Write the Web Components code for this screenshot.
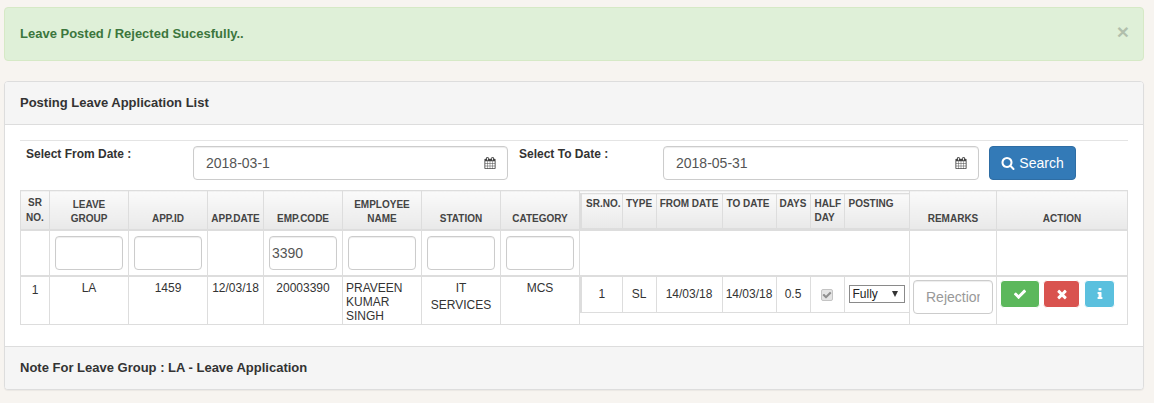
<!DOCTYPE html>
<html>
<head>
<meta charset="utf-8">
<title>Posting Leave Application List</title>
<style>
    html, body{
        margin: 0;
        height: 403px;
        overflow: hidden;
    }
    body{
        background-color: #f7f4f0;
        font-family: "Liberation Sans", Arial, sans-serif;
        font-size: 12px;
        color: #333;
        padding: 7px 10px 0 4px;
        box-sizing: border-box;
    }
</style>
</head>
<body>
    <app-alert>Leave Posted / Rejected Sucesfully..</app-alert>

    <app-panel>
        <span slot="heading">Posting Leave Application List</span>
        <date-search from="2018-03-1" to="2018-05-31"></date-search>
        <leave-table></leave-table>
        <span slot="footer">Note For Leave Group : LA - Leave Application</span>
    </app-panel>

<script>
const ICONS = {
    search: "M1216 832q0-185-131.5-316.5t-316.5-131.5-316.5 131.5-131.5 316.5 131.5 316.5 316.5 131.5 316.5-131.5 131.5-316.5zm512 832q0 52-38 90t-90 38q-54 0-90-38l-343-342q-179 124-399 124-143 0-273.5-55.5t-225-150-150-225-55.5-273.5 55.5-273.5 150-225 225-150 273.5-55.5 273.5 55.5 225 150 150 225 55.5 273.5q0 220-124 399l343 343q37 37 37 90z",
    check: "M1671 566q0 40-28 68l-724 724-136 136q-28 28-68 28t-68-28l-136-136-362-362q-28-28-28-68t28-68l136-136q28-28 68-28t68 28l294 295 656-657q28-28 68-28t68 28l136 136q28 28 28 68z",
    times: "M1490 1322q0 40-28 68l-136 136q-28 28-68 28t-68-28l-294-294-294 294q-28 28-68 28t-68-28l-136-136q-28-28-28-68t28-68l294-294-294-294q-28-28-28-68t28-68l136-136q28-28 68-28t68 28l294 294 294-294q28-28 68-28t68 28l136 136q28 28 28 68t-28 68l-294 294 294 294q28 28 28 68z",
    info: "M1216 1344v128q0 26-19 45t-45 19h-512q-26 0-45-19t-19-45v-128q0-26 19-45t45-19h64v-384h-64q-26 0-45-19t-19-45v-128q0-26 19-45t45-19h384q26 0 45 19t19 45v576h64q26 0 45 19t19 45zm-128-1152v192q0 26-19 45t-45 19h-256q-26 0-45-19t-19-45v-192q0-26 19-45t45-19h256q26 0 45 19t19 45z",
    calendar: "M192 1664h288v-288h-288v288zm352 0h320v-288h-320v288zm-352-352h288v-320h-288v320zm352 0h320v-320h-320v320zm-352-384h288v-288h-288v288zm736 736h320v-288h-320v288zm-384-736h320v-288h-320v288zm768 736h288v-288h-288v288zm-384-352h320v-320h-320v320zm-352-864v-288q0-13-9.5-22.5t-22.5-9.5h-64q-13 0-22.5 9.5t-9.5 22.5v288q0 13 9.5 22.5t22.5 9.5h64q13 0 22.5-9.5t9.5-22.5zm736 864h288v-320h-288v320zm-384-384h320v-288h-320v288zm384 0h288v-288h-288v288zm32-480v-288q0-13-9.5-22.5t-22.5-9.5h-64q-13 0-22.5 9.5t-9.5 22.5v288q0 13 9.5 22.5t22.5 9.5h64q13 0 22.5-9.5t9.5-22.5zm384-64v1280q0 52-38 90t-90 38h-1408q-52 0-90-38t-38-90v-1280q0-52 38-90t90-38h128v-96q0-66 47-113t113-47h64q66 0 113 47t47 113v96h384v-96q0-66 47-113t113-47h64q66 0 113 47t47 113v96h128q52 0 90 38t38 90z"
};

class FaIcon extends HTMLElement {
    constructor() {
        super();
        const size = this.getAttribute("size") || 14;
        this.attachShadow({mode: 'open'}).innerHTML = `
            <style>
                :host{ display: inline-flex; }
                svg{ display: block; fill: currentColor; }
            </style>
            <svg width="${size}" height="${size}" viewBox="0 0 1792 1792"><path d="${ICONS[this.getAttribute("name")]}"/></svg>
        `;
    }
}
customElements.define('fa-icon', FaIcon);

class AppAlert extends HTMLElement {
    constructor() {
        super();
        this.attachShadow({mode: 'open'}).innerHTML = `
            <style>
                :host{
                    display: flex;
                    justify-content: space-between;
                    align-items: center;
                    box-sizing: border-box;
                    height: 54px;
                    margin-bottom: 20px;
                    padding: 0 15px 1px;
                    background-color: #dff0d8;
                    border: 1px solid #d6e9c6;
                    border-radius: 4px;
                    color: #3c763d;
                    font-size: 13px;
                    font-weight: bold;
                }
                .close{
                    font-size: 21px;
                    line-height: 1;
                    color: #000;
                    opacity: .2;
                    margin: -4px -1px 0 0;
                }
            </style>
            <span><slot></slot></span>
            <span class="close">×</span>
        `;
    }
}
customElements.define('app-alert', AppAlert);

class AppPanel extends HTMLElement {
    constructor() {
        super();
        this.attachShadow({mode: 'open'}).innerHTML = `
            <style>
                :host{
                    display: block;
                    box-sizing: border-box;
                    height: 309px;
                    background-color: #fff;
                    border: 1px solid #ddd;
                    border-radius: 4px;
                    box-shadow: 0 1px 1px rgba(0,0,0,.05);
                    font-size: 12px;
                }
                .head, .foot{
                    display: flex;
                    align-items: center;
                    box-sizing: border-box;
                    padding: 0 15px 2px;
                    background-color: #f5f5f5;
                    font-size: 13px;
                    font-weight: bold;
                    color: #333;
                }
                .head{
                    height: 43px;
                    border-bottom: 1px solid #ddd;
                    border-radius: 3px 3px 0 0;
                }
                .foot{
                    height: 43px;
                    border-top: 1px solid #ddd;
                    border-radius: 0 0 3px 3px;
                }
                .body{
                    height: 221px;
                    box-sizing: border-box;
                    padding: 15px 15px 20px;
                }
            </style>
            <div class="head"><slot name="heading"></slot></div>
            <div class="body"><slot></slot></div>
            <div class="foot"><slot name="footer"></slot></div>
        `;
    }
}
customElements.define('app-panel', AppPanel);

class DateField extends HTMLElement {
    constructor() {
        super();
        this.attachShadow({mode: 'open'}).innerHTML = `
            <style>
                :host{
                    display: flex;
                    align-items: center;
                    justify-content: space-between;
                    box-sizing: border-box;
                    height: 34px;
                    padding: 0 11px 0 12px;
                    background-color: #fff;
                    border: 1px solid #ccc;
                    border-radius: 4px;
                    box-shadow: inset 0 1px 1px rgba(0,0,0,.075);
                    color: #555;
                    font-size: 14px;
                }
                fa-icon{ color: #444; }
            </style>
            <span>${this.getAttribute("value")}</span>
            <fa-icon name="calendar" size="12"></fa-icon>
        `;
    }
}
customElements.define('date-field', DateField);

class DateSearch extends HTMLElement {
    constructor() {
        super();
        this.attachShadow({mode: 'open'}).innerHTML = `
            <style>
                :host{ display: block; }
                hr{
                    margin: 0 0 5px;
                    border: 0;
                    border-top: 1px solid #e4e4e4;
                }
                .row{
                    display: grid;
                    grid-template-columns: 167px 315px 155px 316px 97px;
                    padding-left: 6px;
                    margin-bottom: 10px;
                    height: 34px;
                }
                label{
                    font-weight: bold;
                    font-size: 12px;
                    line-height: 17px;
                    color: #333;
                }
                label.to{ margin-left: 11px; }
                button{
                    display: flex;
                    align-items: center;
                    justify-content: center;
                    gap: 4px;
                    margin-left: 10px;
                    padding: 0;
                    height: 34px;
                    background-color: #337ab7;
                    border: 1px solid #2e6da4;
                    border-radius: 4px;
                    color: #fff;
                    font: 14px "Liberation Sans", Arial, sans-serif;
                }
            </style>
            <hr>
            <div class="row">
                <label>Select From Date :</label>
                <date-field value="${this.getAttribute("from")}"></date-field>
                <label class="to">Select To Date :</label>
                <date-field value="${this.getAttribute("to")}"></date-field>
                <button><fa-icon name="search" size="14"></fa-icon>Search</button>
            </div>
        `;
    }
}
customElements.define('date-search', DateSearch);

class LeaveTable extends HTMLElement {
    constructor() {
        super();
        this.attachShadow({mode: 'open'}).innerHTML = `
            <style>
                :host{ display: block; }
                table{
                    border-collapse: collapse;
                    table-layout: fixed;
                    border-spacing: 0;
                }
                .outer{ width: 1108px; }
                th, td{
                    border: 1px solid #ddd;
                    padding: 0;
                    text-align: center;
                }
                th{
                    font-size: 10px;
                    font-weight: bold;
                    line-height: 14px;
                    color: #444;
                    background-image: linear-gradient(to bottom, #fafafa, #e9e9e9);
                }
                .outer > thead > tr > th{
                    height: 38px;
                    vertical-align: bottom;
                    padding-bottom: 3px;
                    border-bottom-width: 2px;
                    box-sizing: border-box;
                }
                .outer > thead > tr > th.mid{
                    vertical-align: middle;
                    padding-bottom: 1px;
                    line-height: 15px;
                }
                .outer > thead > tr > th.nest{
                    vertical-align: top;
                    padding: 2px 0 0 0;
                }
                td{
                    font-size: 12px;
                    line-height: 17px;
                    color: #333;
                    vertical-align: top;
                }
                .filter td{
                    height: 44px;
                    padding: 0 5px;
                    vertical-align: middle;
                    border-bottom-width: 2px;
                }
                .filter input{
                    display: block;
                    box-sizing: border-box;
                    width: 100%;
                    height: 34px;
                    padding: 0 2px;
                    border: 1px solid #ccc;
                    border-radius: 4px;
                    box-shadow: inset 0 1px 1px rgba(0,0,0,.075);
                    color: #555;
                    font: 14px "Liberation Sans", Arial, sans-serif;
                }
                .data > td{
                    box-sizing: border-box;
                    height: 48px;
                    padding-top: 3px;
                }
                .data > td.num{ padding-top: 5px; }
                .data > td.name{
                    text-align: left;
                    padding: 4px 0 0 3px;
                    line-height: 14px;
                }
                .data > td.nest{ padding: 0; }
                .inner{ width: 328px; margin-left: 0; }
                .inner th{
                    height: 35px;
                    box-sizing: border-box;
                    vertical-align: top;
                    padding: 3px 0 0 4px;
                    text-align: left;
                    white-space: nowrap;
                }
                .inner td{
                    height: 35px;
                    box-sizing: border-box;
                    vertical-align: middle;
                    text-align: center;
                }
                .inner th.c{ text-align: center; padding-left: 0; }
                .inner tr > :first-child{ border-left-width: 2px; }
                .inner tbody tr > td{ border-top: 0; }
                .chk{
                    display: inline-grid;
                    margin-top: 3px;
                    vertical-align: top;
                    color: #8f8f8f;
                }
                .chk > *{
                    grid-area: 1 / 1;
                    place-self: center;
                }
                .chk input{
                    appearance: none;
                    width: 12px;
                    height: 12px;
                    margin: 0;
                    background-color: #e4e4e4;
                    border: 1px solid #c4c4c4;
                    border-radius: 2px;
                }
                .sel{
                    display: inline-grid;
                    vertical-align: top;
                    margin-left: 4px;
                    float: left;
                }
                .sel > *{ grid-area: 1 / 1; }
                .sel i{
                    place-self: center end;
                    margin-right: 7px;
                    width: 0;
                    height: 0;
                    border-left: 3.5px solid transparent;
                    border-right: 3.5px solid transparent;
                    border-top: 6px solid #333;
                    pointer-events: none;
                }
                select{
                    appearance: none;
                    display: block;
                    box-sizing: border-box;
                    width: 56px;
                    height: 18px;
                    padding: 0 0 0 3px;
                    font: 12px "Liberation Sans", Arial, sans-serif;
                    color: #222;
                    background-color: #fff;
                    border: 1px solid #8a8a8a;
                    border-radius: 0;
                }
                .remark{
                    display: block;
                    box-sizing: border-box;
                    width: 80px;
                    height: 34px;
                    margin: 0 0 0 3px;
                    padding: 0 12px;
                    border: 1px solid #ccc;
                    border-radius: 4px;
                    box-shadow: inset 0 1px 1px rgba(0,0,0,.075);
                    font: 14px "Liberation Sans", Arial, sans-serif;
                }
                .remark::placeholder{ color: #999; }
                .actions{
                    display: flex;
                    gap: 3px;
                    padding-left: 3px;
                }
                .actions button{
                    display: flex;
                    align-items: center;
                    justify-content: center;
                    box-sizing: border-box;
                    height: 28px;
                    padding: 0;
                    border: 1px solid;
                    border-radius: 4px;
                    color: #fff;
                }
                .ok{ width: 40px; background-color: #5cb85c; border-color: #4cae4c; }
                .no{ width: 37px; background-color: #d9534f; border-color: #d43f3a; }
                .more{ width: 31px; margin-left: 1px; background-color: #5bc0de; border-color: #46b8da; }
            </style>
            <table class="outer">
                <colgroup>
                    <col style="width:29px"><col style="width:79px"><col style="width:79px"><col style="width:56px">
                    <col style="width:79px"><col style="width:79px"><col style="width:79px"><col style="width:79px">
                    <col style="width:330px"><col style="width:87px"><col style="width:131px">
                </colgroup>
                <thead>
                    <tr>
                        <th class="mid">SR<br>NO.</th>
                        <th>LEAVE<br>GROUP</th>
                        <th>APP.ID</th>
                        <th>APP.DATE</th>
                        <th>EMP.CODE</th>
                        <th>EMPLOYEE<br>NAME</th>
                        <th>STATION</th>
                        <th>CATEGORY</th>
                        <th class="nest">
                            <table class="inner">
                                <colgroup>
                                    <col style="width:41px"><col style="width:34px"><col style="width:66px"><col style="width:54px">
                                    <col style="width:34px"><col style="width:34px"><col style="width:65px">
                                </colgroup>
                                <thead>
                                    <tr>
                                        <th>SR.NO.</th><th class="c">TYPE</th><th class="c">FROM DATE</th><th>TO DATE</th>
                                        <th class="c">DAYS</th><th>HALF<br>DAY</th><th>POSTING</th>
                                    </tr>
                                </thead>
                            </table>
                        </th>
                        <th>REMARKS</th>
                        <th>ACTION</th>
                    </tr>
                </thead>
                <tbody>
                    <tr class="filter">
                        <td></td>
                        <td><input type="text"></td>
                        <td><input type="text"></td>
                        <td></td>
                        <td><input type="text" value="3390"></td>
                        <td><input type="text"></td>
                        <td><input type="text"></td>
                        <td><input type="text"></td>
                        <td></td><td></td><td></td>
                    </tr>
                    <tr class="data">
                        <td class="num">1</td>
                        <td>LA</td>
                        <td>1459</td>
                        <td>12/03/18</td>
                        <td>20003390</td>
                        <td class="name">PRAVEEN KUMAR SINGH</td>
                        <td>IT<br>SERVICES</td>
                        <td>MCS</td>
                        <td class="nest">
                            <table class="inner">
                                <colgroup>
                                    <col style="width:41px"><col style="width:34px"><col style="width:66px"><col style="width:54px">
                                    <col style="width:34px"><col style="width:34px"><col style="width:65px">
                                </colgroup>
                                <tbody>
                                    <tr>
                                        <td>1</td><td>SL</td><td>14/03/18</td><td>14/03/18</td><td>0.5</td>
                                        <td><span class="chk"><input type="checkbox" checked disabled><fa-icon name="check" size="10"></fa-icon></span></td>
                                        <td><span class="sel"><select><option>Fully</option></select><i></i></span></td>
                                    </tr>
                                </tbody>
                            </table>
                        </td>
                        <td><input class="remark" type="text" placeholder="Rejection"></td>
                        <td>
                            <div class="actions">
                                <button class="ok"><fa-icon name="check" size="14"></fa-icon></button>
                                <button class="no"><fa-icon name="times" size="14"></fa-icon></button>
                                <button class="more"><fa-icon name="info" size="14"></fa-icon></button>
                            </div>
                        </td>
                    </tr>
                </tbody>
            </table>
        `;
    }
}
customElements.define('leave-table', LeaveTable);
</script>
</body>
</html>
